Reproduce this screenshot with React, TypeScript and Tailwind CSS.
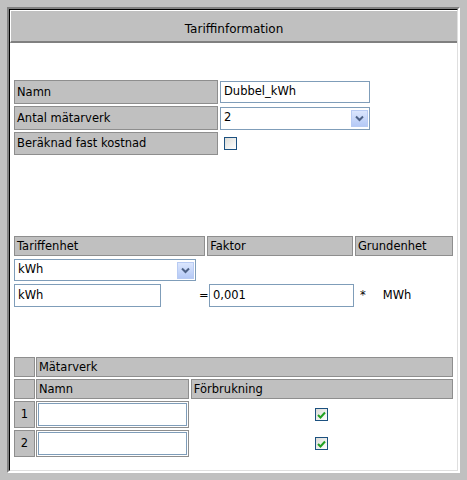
import React from 'react';

const font = { fontFamily: '"DejaVu Sans", Verdana, sans-serif' };

function ArrowBtn() {
  return (
    <span className="flex h-[17px] w-[17px] items-center justify-center border border-[#b8cbf3] bg-gradient-to-b from-[#dbe6fd] to-[#b5c9f6]">
      <svg width="9" height="7" viewBox="0 0 9 7">
        <path d="M1 1.5 L4.5 5 L8 1.5" fill="none" stroke="#4d6185" strokeWidth="2" />
      </svg>
    </span>
  );
}

function Select({ value, className }: { value: string; className: string }) {
  return (
    <div className={`flex items-center justify-between border border-[#7f9db9] bg-white pl-[3px] pr-[1px] ${className}`}>
      <span>{value}</span>
      <ArrowBtn />
    </div>
  );
}

function Box({ checked }: { checked?: boolean }) {
  return (
    <span className="flex h-[13px] w-[13px] items-center justify-center border border-[#1c5180] bg-gradient-to-br from-[#dcdcd7] to-white">
      {checked && (
        <svg width="9" height="8" viewBox="0 0 9 8">
          <path d="M1 4 L3.5 6.5 L8 1.5" fill="none" stroke="#21a121" strokeWidth="2" />
        </svg>
      )}
    </span>
  );
}

function Label({ children, className }: { children?: React.ReactNode; className: string }) {
  return (
    <div className={`flex items-center border border-[#8e8e8e] bg-[#c0c0c0] px-[2px] pt-px ${className}`}>
      {children}
    </div>
  );
}

export default function App() {
  return (
    <div className="h-[480px] w-[467px] bg-[#c0c0c0] p-[7px] text-[11.5px] text-black" style={font}>
      <div className="h-full border-2 border-t-[#808080] border-l-[#808080] border-b-white border-r-white">
        <div className="flex h-full flex-col border border-t-black border-l-black border-b-[#dfdfdf] border-r-[#dfdfdf] bg-white">
          <div className="flex h-[33px] items-center justify-center border-t border-l border-t-white border-l-white border-b-2 border-b-[#808080] bg-[#c0c0c0] pt-[5px] text-[12px]">
            Tariffinformation
          </div>

          <div className="flex flex-col px-[4px]">
            {/* general */}
            <div className="mt-[37px] flex flex-col gap-[2px]">
              <div className="flex items-center gap-[2px]">
                <Label className="h-[24px] w-[204px]">Namn</Label>
                <div className="flex h-[22px] w-[150px] items-center border border-[#7f9db9] px-[3px]">
                  Dubbel_kWh
                </div>
              </div>
              <div className="flex items-center gap-[2px]">
                <Label className="h-[24px] w-[204px]">Antal mätarverk</Label>
                <Select value="2" className="h-[23px] w-[150px]" />
              </div>
              <div className="flex items-center gap-[2px]">
                <Label className="h-[23px] w-[204px]">Beräknad fast kostnad</Label>
                <span className="ml-[4px]">
                  <Box />
                </span>
              </div>
            </div>

            {/* tariff unit */}
            <div className="mt-[81px] flex flex-col">
              <div className="flex gap-[2px]">
                <Label className="h-[20px] w-[193px]">Tariffenhet</Label>
                <Label className="h-[20px] w-[147px]">Faktor</Label>
                <Label className="h-[20px] w-[99px]">Grundenhet</Label>
              </div>
              <Select value="kWh" className="mt-[3px] h-[22px] w-[182px]" />
              <div className="mt-[3px] flex items-center">
                <div className="flex h-[23px] w-[147px] items-center border border-[#7f9db9] px-[3px]">kWh</div>
                <span className="ml-[38px] w-[10px]">=</span>
                <div className="flex h-[23px] w-[145px] items-center border border-[#7f9db9] px-[3px]">0,001</div>
                <span className="ml-[6px]">*</span>
                <span className="ml-[17px]">MWh</span>
              </div>
            </div>

            {/* meters */}
            <div className="mt-[50px] flex flex-col gap-[2px]">
              <div className="flex gap-[1px]">
                <Label className="h-[20px] w-[21px]" />
                <Label className="h-[20px] w-[420px]">Mätarverk</Label>
              </div>
              <div className="flex gap-[1px]">
                <Label className="h-[20px] w-[21px]" />
                <Label className="h-[20px] w-[154px]">Namn</Label>
                <Label className="ml-px h-[20px] w-[264px]">Förbrukning</Label>
              </div>
              {['1', '2'].map((n) => (
                <div key={n} className="flex gap-[1px]">
                  <Label className="h-[27px] w-[21px] justify-center">{n}</Label>
                  <div className="h-[27px] w-[154px] border border-[#8e8e8e] p-[1px]">
                    <div className="h-full w-full border border-[#7f9db9]" />
                  </div>
                  <div className="ml-px flex h-[27px] w-[264px] items-center justify-center">
                    <Box checked />
                  </div>
                </div>
              ))}
            </div>
          </div>
        </div>
      </div>
    </div>
  );
}
